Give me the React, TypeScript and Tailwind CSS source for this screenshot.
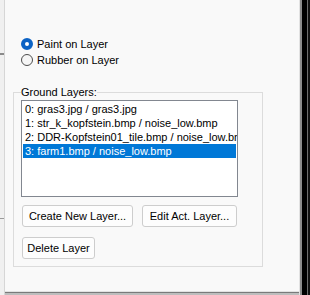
const layers = [
  "0: gras3.jpg / gras3.jpg",
  "1: str_k_kopfstein.bmp / noise_low.bmp",
  "2: DDR-Kopfstein01_tile.bmp / noise_low.bmp",
  "3: farm1.bmp / noise_low.bmp",
];

function Radio({ label, checked }: { label: string; checked?: boolean }) {
  return (
    <div className="flex h-[16px] items-center gap-[4px]">
      {checked ? (
        <span className="box-border h-[12px] w-[12px] rounded-full border-[4px] border-[#0b62c4] bg-white" />
      ) : (
        <span className="box-border h-[12px] w-[12px] rounded-full border border-[#4d4d4d] bg-[#f6f6f6]" />
      )}
      <span className="leading-[16px]">{label}</span>
    </div>
  );
}

function Button({ label, width }: { label: string; width: string }) {
  return (
    <button
      className={`h-[22px] ${width} rounded-[3px] border border-[#cdcdcd] bg-[#fdfdfd] text-center text-[11px] leading-[20px] text-black`}
    >
      {label}
    </button>
  );
}

export default function App() {
  return (
    <div className="flex h-[295px] w-[310px] overflow-hidden bg-[#f0f0f0] font-['Liberation_Sans',Arial,sans-serif] text-[11px] text-black">
      {/* left edge of the neighbouring pane */}
      <div className="flex w-[4px] flex-col">
        <div className="h-[53px]" />
        <div className="h-[2px] bg-[#8a8a8a]" />
        <div className="h-[163px]" />
        <div className="h-[1px] bg-[#9a9a9a]" />
      </div>
      <div className="w-[1px] bg-[#d6d6d6]" />

      {/* panel */}
      <div className="flex w-[294px] flex-col">
        <div className="flex flex-1 flex-col bg-[#f9f9f9] pt-[36px]">
          <div className="flex flex-col pl-[16px]">
            <Radio label="Paint on Layer" checked />
            <Radio label="Rubber on Layer" />
          </div>

          <fieldset className="ml-[8px] mt-[18px] w-[250px] border border-[#dcdcdc] px-[7px] pb-[7px]">
            <legend className="px-0 leading-[12px]">Ground Layers:</legend>
            <div className="mt-[2px] h-[97px] w-[217px] overflow-hidden border border-[#828790] bg-white p-[1px]">
              {layers.map((l, i) => (
                <div
                  key={l}
                  className={`h-[14px] whitespace-nowrap px-[2px] leading-[14px] ${
                    i === 3 ? "bg-[#0078d7] text-white" : ""
                  }`}
                >
                  {l}
                </div>
              ))}
            </div>
            <div className="ml-[1px] mt-[8px] flex gap-[9px]">
              <Button label="Create New Layer..." width="w-[111px]" />
              <Button label="Edit Act. Layer..." width="w-[95px]" />
            </div>
            <div className="ml-[1px] mt-[10px] flex">
              <Button label="Delete Layer" width="w-[73px]" />
            </div>
          </fieldset>
        </div>
        <div className="h-[1px] bg-[#e2e2e2]" />
        <div className="h-[1px] bg-[#7a7a7a]" />
        <div className="h-[2px] bg-[#bdbdbd]" />
      </div>

      {/* window frame on the right */}
      <div className="w-[1px] bg-[#e2e2e2]" />
      <div className="w-[2px] bg-[#8c8c8c]" />
      <div className="w-[5px] bg-black" />
      <div className="w-[1px] bg-[#6e6e6e]" />
      <div className="w-[2px] bg-[#111]" />
    </div>
  );
}
